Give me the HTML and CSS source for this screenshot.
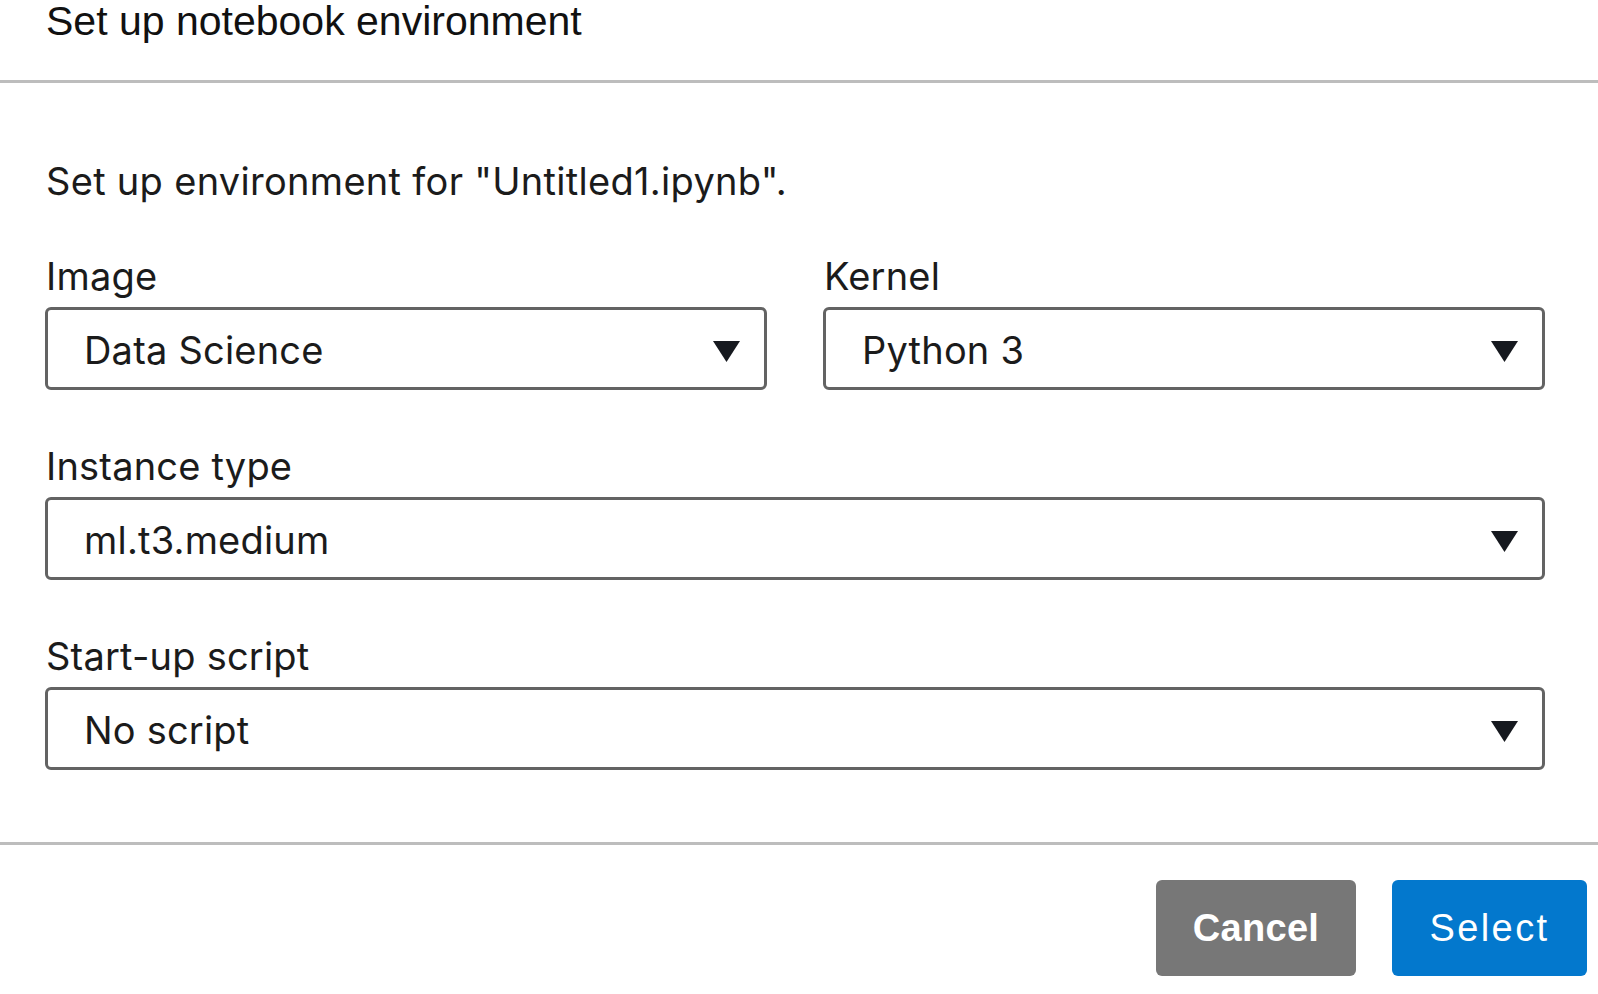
FILE: index.html
```html
<!DOCTYPE html>
<html>
<head>
<meta charset="utf-8">
<link rel="stylesheet" href="styles.css">
</head>
<body>
<div class="dialog">
  <div class="header">
    <h1 class="title">Set up notebook environment</h1>
  </div>
  <div class="content">
    <p class="intro">Set up environment for "Untitled1.ipynb".</p>
    <div class="row two">
      <div class="field">
        <div class="label">Image</div>
        <div class="select"><span class="value">Data Science</span><svg class="caret" width="27" height="21" viewBox="0 0 27 21"><polygon points="0,0 27,0 13.5,21" fill="#16191f"/></svg></div>
      </div>
      <div class="field">
        <div class="label">Kernel</div>
        <div class="select"><span class="value">Python 3</span><svg class="caret" width="27" height="21" viewBox="0 0 27 21"><polygon points="0,0 27,0 13.5,21" fill="#16191f"/></svg></div>
      </div>
    </div>
    <div class="row">
      <div class="field">
        <div class="label">Instance type</div>
        <div class="select"><span class="value">ml.t3.medium</span><svg class="caret" width="27" height="21" viewBox="0 0 27 21"><polygon points="0,0 27,0 13.5,21" fill="#16191f"/></svg></div>
      </div>
    </div>
    <div class="row">
      <div class="field">
        <div class="label">Start-up script</div>
        <div class="select"><span class="value">No script</span><svg class="caret" width="27" height="21" viewBox="0 0 27 21"><polygon points="0,0 27,0 13.5,21" fill="#16191f"/></svg></div>
      </div>
    </div>
  </div>
  <div class="footer">
    <button class="btn cancel">Cancel</button>
    <button class="btn primary">Select</button>
  </div>
</div>
</body>
</html>
```
FILE: styles.css
```css
html, body {
  margin: 0;
  padding: 0;
  background: #ffffff;
}
body {
  font-family: Inter, "Noto Sans", sans-serif;
  color: #1b1b1b;
}
.dialog {
  width: 1598px;
}
.header {
  height: 80px;
  padding-left: 46px;
  border-bottom: 3px solid #bdbdbd;
}
.title {
  margin: 0;
  font-family: "Liberation Sans", Arial, sans-serif;
  font-weight: 400;
  font-size: 41px;
  line-height: 42px;
  color: #111111;
}
.content {
  padding: 76px 53px 72px 45px;
}
.intro {
  margin: 0 0 51px 1px;
  font-size: 38px;
  letter-spacing: 0.3px;
  line-height: 44px;
}
.row {
  margin-top: 54px;
}
.row.two {
  margin-top: 0;
  display: grid;
  grid-template-columns: 1fr 1fr;
  column-gap: 56px;
}
.label {
  font-size: 38px;
  letter-spacing: 0.2px;
  line-height: 44px;
  margin-bottom: 9px;
  padding-left: 1px;
}
.select {
  box-sizing: border-box;
  height: 83px;
  border: 3px solid #636363;
  border-radius: 6px;
  display: flex;
  align-items: center;
  justify-content: space-between;
  padding: 2px 24px 0 36px;
}
.value {
  font-size: 38px;
  letter-spacing: 0.2px;
  line-height: 44px;
}
.caret {
  margin-top: 4px;
  display: block;
}
.footer {
  border-top: 3px solid #bdbdbd;
  padding: 35px 11px 0 0;
  display: flex;
  justify-content: flex-end;
  gap: 36px;
}
.btn {
  height: 96px;
  border: none;
  border-radius: 6px;
  color: #ffffff;
  font-family: "Liberation Sans", Arial, sans-serif;
  font-size: 38px;
  padding: 0;
}
.cancel {
  width: 200px;
  background: #777777;
  font-weight: 700;
  letter-spacing: 0.3px;
}
.primary {
  width: 195px;
  background: #0378cd;
  font-weight: 400;
  letter-spacing: 2.4px;
}
```
